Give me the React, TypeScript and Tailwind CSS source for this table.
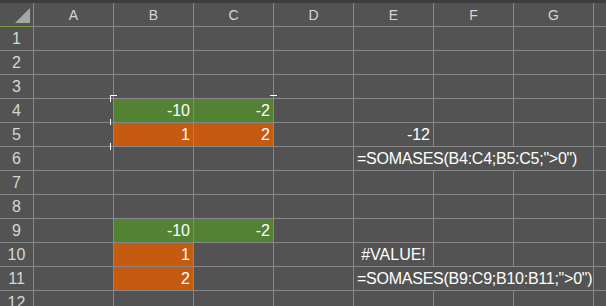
type Cell = {
  v: string;
  fill?: 'green' | 'orange';
  align?: 'left' | 'right' | 'center';
  span?: number;
  tight?: boolean;
};

const cols = ['A', 'B', 'C', 'D', 'E', 'F', 'G'];

const cells: Record<string, Cell> = {
  B4: { v: '-10', fill: 'green', align: 'right' },
  C4: { v: '-2', fill: 'green', align: 'right' },
  B5: { v: '1', fill: 'orange', align: 'right' },
  C5: { v: '2', fill: 'orange', align: 'right' },
  E5: { v: '-12', align: 'right' },
  E6: { v: '=SOMASES(B4:C4;B5:C5;">0")', align: 'left', span: 3, tight: true },
  B9: { v: '-10', fill: 'green', align: 'right' },
  C9: { v: '-2', fill: 'green', align: 'right' },
  B10: { v: '1', fill: 'orange', align: 'right' },
  E10: { v: '#VALUE!', align: 'center' },
  B11: { v: '2', fill: 'orange', align: 'right' },
  E11: { v: '=SOMASES(B9:C9;B10:B11;">0")', align: 'left', span: 3, tight: true },
};

const fills = {
  green: 'bg-[#548235]',
  orange: 'bg-[#c55a11]',
};

function Row({ n }: { n: number }) {
  const out: React.ReactNode[] = [];
  let skip = 0;
  cols.forEach((c) => {
    if (skip > 0) {
      skip--;
      return;
    }
    const cell = cells[`${c}${n}`];
    const span = cell?.span ?? 1;
    skip = span - 1;
    const justify =
      cell?.align === 'right' ? 'justify-end' : cell?.align === 'center' ? 'justify-center' : 'justify-start';
    out.push(
      <div
        key={c}
        className={`flex items-end ${justify} shrink-0 h-full border-r border-b border-[#878787] px-[3px] pb-[2px] text-white whitespace-nowrap ${
          span === 3 ? 'w-[240px]' : 'w-[80px]'
        } ${cell?.fill ? fills[cell.fill] : ''} ${cell?.tight ? 'tracking-[-0.25px]' : ''}`}
      >
        {cell?.v}
      </div>,
    );
  });

  return (
    <div className="flex h-[24px] shrink-0">
      <div className="flex items-end justify-center shrink-0 w-[34px] h-full border-r border-b border-[#878787] pb-[2px] text-[#d6d6d6]">
        {n}
      </div>
      {out}
      <div className="shrink-0 w-[13px] h-full border-b border-[#878787]" />
    </div>
  );
}

export default function App() {
  const rows = Array.from({ length: 12 }, (_, i) => i + 1);

  return (
    <div
      className="relative w-[606px] h-[306px] overflow-hidden bg-[#535353] text-[16px] leading-[18px]"
      style={{ fontFamily: '"Liberation Sans", Arial, sans-serif' }}
    >
      <div className="h-[3px] bg-[#3d3d3d]" />

      {/* column headers */}
      <div className="flex h-[24px]">
        <div className="relative shrink-0 w-[34px] h-full border-r border-b border-[#7d9a3c]">
          <svg className="absolute left-[13px] top-[5px]" width="18" height="16" viewBox="0 0 18 16">
            <polygon points="17,0 17,15 2,15" fill="#a6a6a6" />
          </svg>
        </div>
        {cols.map((c) => (
          <div
            key={c}
            className="flex items-center justify-center shrink-0 w-[80px] h-full border-r border-b border-[#878787] text-[14px] text-[#d6d6d6]"
          >
            {c}
          </div>
        ))}
        <div className="shrink-0 w-[13px] h-full border-b border-[#878787]" />
      </div>

      {rows.map((n) => (
        <Row key={n} n={n} />
      ))}

      {/* copy marquee remnants */}
      <div className="absolute left-[110px] top-[95px] w-[7px] h-px bg-white" />
      <div className="absolute left-[110px] top-[95px] w-px h-[7px] bg-white" />
      <div className="absolute left-[270px] top-[95px] w-[7px] h-px bg-white" />
      <div className="absolute left-[110px] top-[119px] w-px h-[6px] bg-white" />
      <div className="absolute left-[110px] top-[143px] w-px h-[7px] bg-white" />
    </div>
  );
}
